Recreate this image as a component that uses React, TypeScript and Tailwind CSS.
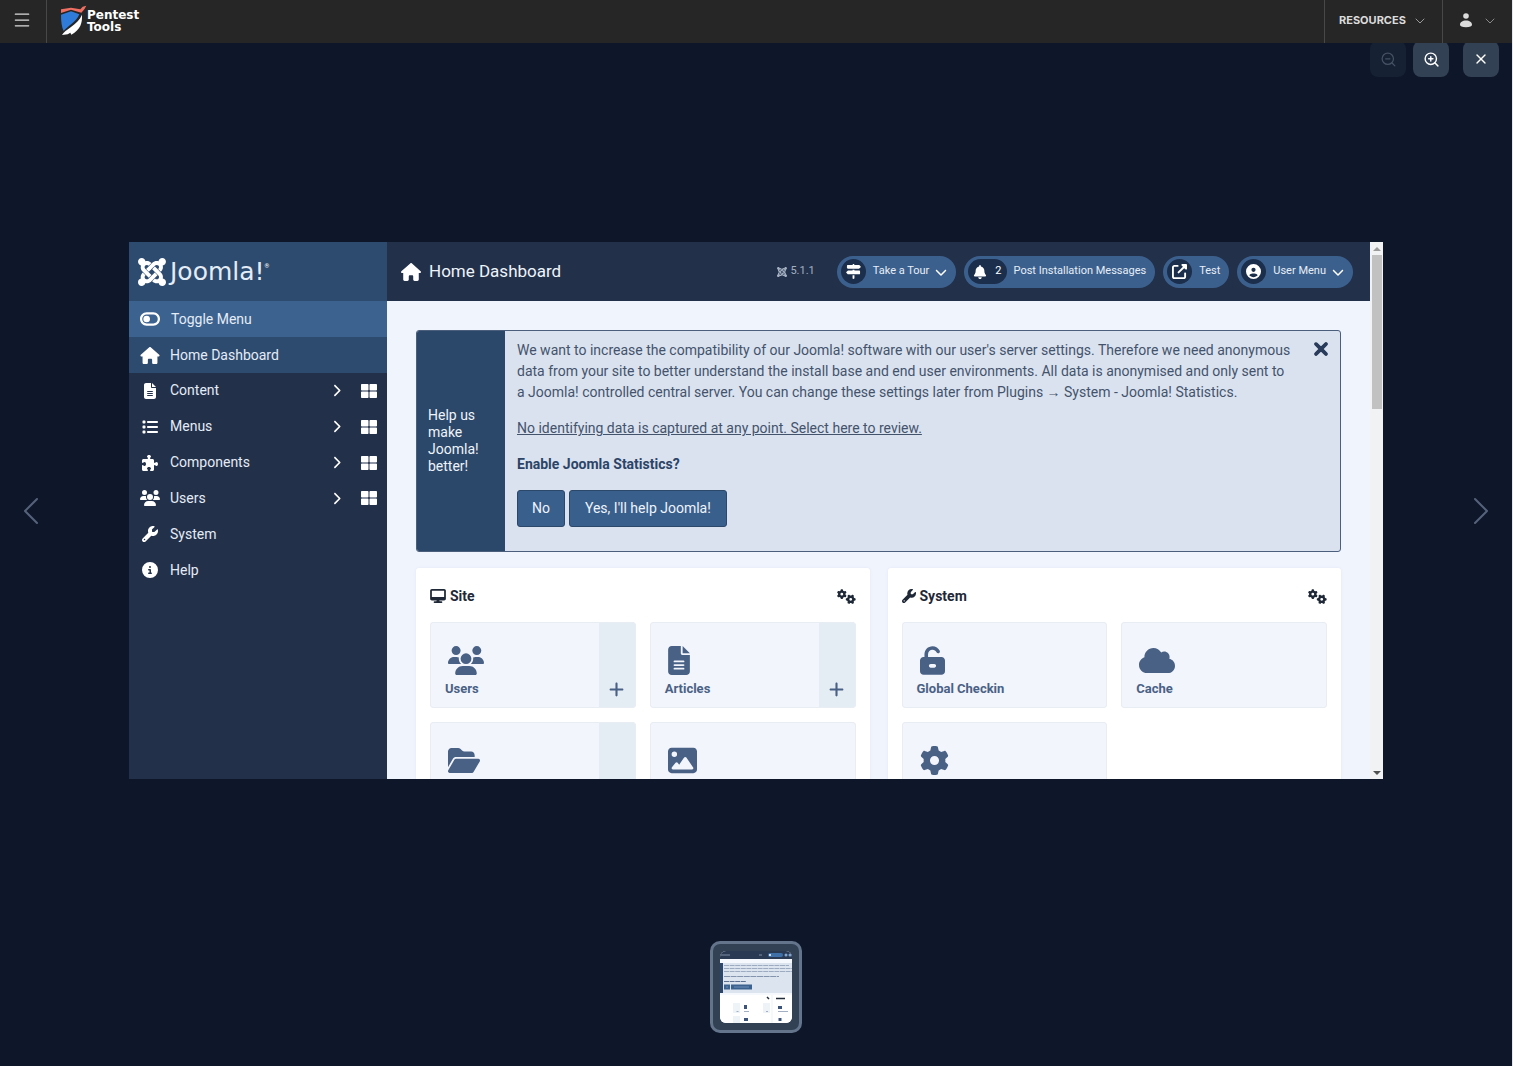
import type { ReactNode } from 'react'
import { ChevronDown, ChevronLeft, ChevronRight, Menu, X, ZoomIn, ZoomOut } from 'lucide-react'
import { FaThLarge } from 'react-icons/fa'
import {
  FaBell,
  FaChevronDown,
  FaChevronRight,
  FaCircleInfo,
  FaCircleUser,
  FaCloud,
  FaDesktop,
  FaFileLines,
  FaFolderOpen,
  FaGear,
  FaGears,
  FaHouse,
  FaImage,
  FaJoomla,
  FaList,
  FaPlus,
  FaPuzzlePiece,
  FaSignsPost,
  FaToggleOff,
  FaUnlockKeyhole,
  FaUpRightFromSquare,
  FaUsers,
  FaWrench,
  FaXmark,
} from 'react-icons/fa6'
import type { IconType } from 'react-icons'

interface MenuItem {
  label: string
  icon: IconType
  expandable?: boolean
}

interface TileItem {
  label?: string
  icon: IconType
  iconWidth: string
  canAdd?: boolean
}

const MENU_ITEMS: MenuItem[] = [
  { label: 'Content', icon: FaFileLines, expandable: true },
  { label: 'Menus', icon: FaList, expandable: true },
  { label: 'Components', icon: FaPuzzlePiece, expandable: true },
  { label: 'Users', icon: FaUsers, expandable: true },
  { label: 'System', icon: FaWrench },
  { label: 'Help', icon: FaCircleInfo },
]

const SITE_TILES: TileItem[] = [
  { label: 'Users', icon: FaUsers, iconWidth: 'w-9', canAdd: true },
  { label: 'Articles', icon: FaFileLines, iconWidth: 'w-[22px]', canAdd: true },
  { icon: FaFolderOpen, iconWidth: 'w-8', canAdd: true },
  { icon: FaImage, iconWidth: 'w-[29px]' },
]

const SYSTEM_TILES: TileItem[] = [
  { label: 'Global Checkin', icon: FaUnlockKeyhole, iconWidth: 'w-[25px]' },
  { label: 'Cache', icon: FaCloud, iconWidth: 'w-9' },
  { icon: FaGear, iconWidth: 'w-[29px]' },
]

function ShieldLogo() {
  return (
    <svg viewBox="180 15 81 93" className="h-[31px] w-[27px]" aria-hidden="true">
      <path d="M183 39V28L213 23l28 5 7-8 11-3-6 11-9 10-31-9z" fill="#ef6f63" />
      <path d="M183 44l30-10 25 9c-5 12-12 19-21 27-11 9-19 15-26 23-6-12-8-30-8-49z" fill="#2f7bd9" />
      <path d="M246 44c1 25-4 44-32 60l-3-6-8 5-17 2c5-9 14-14 27-24 15-11 26-21 33-37z" fill="#fff" />
    </svg>
  )
}

function UserGlyph() {
  return (
    <svg viewBox="0 0 12 15" className="h-[15px] w-3" fill="#dcdcdc" aria-hidden="true">
      <circle cx="6" cy="3" r="2.8" />
      <path d="M6 7.600c3.600 0 6 1.900 6 4.200 0 1.500-2 2.400-6 2.400s-6-.9-6-2.400c0-2.300 2.400-4.200 6-4.200z" />
    </svg>
  )
}

function TopBar() {
  return (
    <header className="relative z-10 flex h-[43px] shrink-0 items-stretch bg-[#262626] font-['Inter',sans-serif] text-white">
      <button aria-label="Open menu" className="flex w-[47px] items-center border-r border-[#484848] pb-[3px] pl-3">
        <Menu size={20} strokeWidth={1.5} className="text-[#dcdcdc]" />
      </button>
      <a href="#" className="flex items-center pb-0.5 pl-[13px]">
        <ShieldLogo />
        <span className="font-['DejaVu_Sans',sans-serif] text-[12px] font-bold leading-3">
          <span className="block">Pentest</span>
          <span className="block">Tools</span>
        </span>
      </a>
      <button className="ml-auto flex w-[118px] items-center gap-1.5 border-l border-[#484848] pb-0.5 pl-3.5 text-[11px] font-bold text-[#dcdcdc]">
        RESOURCES
        <ChevronDown size={16} strokeWidth={1.5} className="text-[#9a9a9a]" />
      </button>
      <button aria-label="Account" className="flex w-[70px] items-center gap-2.5 border-l border-[#484848] pb-0.5 pl-[17px]">
        <UserGlyph />
        <ChevronDown size={16} strokeWidth={1.5} className="text-[#8a8a8a]" />
      </button>
    </header>
  )
}

function ViewerTools() {
  return (
    <div className="flex h-[37px] shrink-0 items-end justify-end pb-[3px] pr-[13px] text-white">
      <button disabled aria-label="Zoom out" className="flex size-9 items-center justify-center rounded-lg bg-[#162133] text-[#455164]">
        <ZoomOut size={17} strokeWidth={1.75} />
      </button>
      <button aria-label="Zoom in" className="ml-[7px] flex size-9 items-center justify-center rounded-lg bg-[#334155]">
        <ZoomIn size={17} strokeWidth={2} />
      </button>
      <button aria-label="Close" className="ml-3.5 flex size-9 items-center justify-center rounded-lg bg-[#334155]">
        <X size={16} strokeWidth={2} />
      </button>
    </div>
  )
}

function Sidebar() {
  return (
    <nav className="w-[258px] shrink-0 bg-[#22304a] text-[14px] text-[#e4ecf6]">
      <div className="flex h-[59px] items-center bg-[#2d4a6f] pl-[9px] text-white">
        <FaJoomla className="h-8 w-7" />
        <span className="ml-1 font-['DejaVu_Sans',sans-serif] text-[25px] leading-7 text-[#e4ecf6]">Joomla!</span>
        <span className="mb-3 text-[6px] leading-none">®</span>
      </div>
      <button className="flex h-9 w-full items-center bg-[#3c628f] pl-[11px]">
        <FaToggleOff className="h-[18px] w-5 text-white" />
        <span className="ml-[11px]">Toggle Menu</span>
      </button>
      <a href="#" className="flex h-9 items-center bg-[#2d4a6f] pl-[11px]">
        <FaHouse className="h-[17px] w-5 text-white" />
        <span className="ml-2.5">Home Dashboard</span>
      </a>
      <ul className="grid h-[215px] grid-rows-6">
        {MENU_ITEMS.map(({ label, icon: Icon, expandable }) => (
          <li key={label} className="flex items-center pl-[11px] pr-2.5">
            <a href="#" className="flex flex-1 items-center">
              <Icon className="h-4 w-5 text-white" />
              <span className="ml-2.5">{label}</span>
            </a>
            {expandable && (
              <>
                <FaChevronRight className="size-[13px] text-white" />
                <a href="#" aria-label={`${label} dashboard`} className="ml-[18px] text-white">
                  <FaThLarge className="size-4" />
                </a>
              </>
            )}
          </li>
        ))}
      </ul>
    </nav>
  )
}

function Pill({ icon, label, count, dropdown }: { icon: ReactNode; label: string; count?: number; dropdown?: boolean }) {
  return (
    <button className="flex h-8 items-center rounded-full bg-[#3c608d] pl-1 pr-[9px] text-[11px] text-[#e6eef8]">
      <span className="flex h-[25px] min-w-[25px] items-center justify-center gap-2 rounded-full bg-[#1b2e4b] px-[5px] text-white">
        {icon}
        {count !== undefined && <span>{count}</span>}
      </span>
      <span className="ml-[7px]">{label}</span>
      {dropdown && <FaChevronDown className="ml-1.5 size-3 text-white" />}
    </button>
  )
}

function DashboardHeader() {
  return (
    <div className="flex h-[59px] items-center bg-[#22304a] pl-3.5 pr-[17px]">
      <FaHouse className="h-[18px] w-5 text-white" />
      <h1 className="ml-2 text-[17px] text-[#eef4fb]">Home Dashboard</h1>
      <div className="ml-auto mr-[22px] flex items-center gap-[3px] text-[11px] text-[#a4b0c2]">
        <FaJoomla className="h-3 w-2.5" />
        5.1.1
      </div>
      <div className="flex gap-2">
        <Pill icon={<FaSignsPost className="size-[15px]" />} label="Take a Tour" dropdown />
        <Pill icon={<FaBell className="size-[14px]" />} label="Post Installation Messages" count={2} />
        <Pill icon={<FaUpRightFromSquare className="size-[15px]" />} label="Test" />
        <Pill icon={<FaCircleUser className="size-[15px]" />} label="User Menu" dropdown />
      </div>
    </div>
  )
}

function StatsAlert() {
  return (
    <section className="flex overflow-hidden rounded-[3px] border border-[#4b5f7d] bg-[#dae2ef] text-[14px] leading-[21px] text-[#44536c]">
      <div className="flex w-[88px] shrink-0 items-center bg-[#2b4769] px-[11px] leading-[17px] text-[#eef4fb]">
        Help us make Joomla! better!
      </div>
      <div className="flex-1 space-y-[15px] pb-6 pl-3 pr-2.5 pt-[9px]">
        <p>
          We want to increase the compatibility of our Joomla! software with our user's server settings. Therefore we
          need anonymous data from your site to better understand the install base and end user environments. All data
          is anonymised and only sent to a Joomla! controlled central server. You can change these settings later from
          Plugins → System - Joomla! Statistics.
        </p>
        <p>
          <a href="#" className="underline">
            No identifying data is captured at any point. Select here to review.
          </a>
        </p>
        <p className="font-bold text-[#2c4467]">Enable Joomla Statistics?</p>
        <div className="flex gap-1 text-[#eef4fb]">
          <button className="h-[37px] rounded-[3px] border border-[#2b4769] bg-[#395f8d] px-3.5">No</button>
          <button className="h-[37px] rounded-[3px] border border-[#2b4769] bg-[#395f8d] px-[15px]">
            Yes, I'll help Joomla!
          </button>
        </div>
      </div>
      <button aria-label="Close" className="mt-2 w-[37px] shrink-0 self-start pl-2 text-[#2a3c5c]">
        <FaXmark className="size-5" stroke="currentColor" strokeWidth={32} />
      </button>
    </section>
  )
}

function Tile({ label, icon: Icon, iconWidth, canAdd }: TileItem) {
  return (
    <div className="flex h-[86px] overflow-hidden rounded-[3px] border border-[#e8ecf3] bg-[#f2f5fb] text-[#4a6186]">
      <a href="#" className="flex-1 pl-3.5 pt-[23px] text-[13px] font-bold leading-4">
        <Icon className={`ml-[3px] h-[29px] ${iconWidth}`} />
        <span className="mt-1.5 block">{label}</span>
      </a>
      {canAdd && (
        <button aria-label="Add" className="flex w-9 items-end justify-center bg-[#e4ecf4] pb-[9px]">
          <FaPlus className="size-[17px]" />
        </button>
      )}
    </div>
  )
}

function TileCard({ title, icon: Icon, iconWidth, tiles }: { title: string; icon: IconType; iconWidth: string; tiles: TileItem[] }) {
  return (
    <section className="rounded-[3px] bg-white px-3.5 pb-3.5 shadow-[0_0_3px_#dfe6f2]">
      <div className="flex h-[54px] items-center pt-0.5 text-[#1f2836]">
        <Icon className={`h-3.5 ${iconWidth}`} />
        <h2 className="ml-1 text-[14px] font-bold">{title}</h2>
        <button aria-label={`${title} settings`} className="ml-auto">
          <FaGears className="h-[15px] w-[19px]" />
        </button>
      </div>
      <div className="grid grid-cols-2 gap-3.5">
        {tiles.map((tile, index) => (
          <Tile key={index} {...tile} />
        ))}
      </div>
    </section>
  )
}

function Scrollbar() {
  return (
    <div className="flex w-[13px] shrink-0 flex-col items-center justify-between bg-[#f1f2f4] pb-1 pt-[5px]">
      <div className="flex flex-col items-center gap-1">
        <span className="border-x-4 border-b-4 border-x-transparent border-b-[#9a9a9a]" />
        <span className="h-[154px] w-2.5 bg-[#c1c1c1]" />
      </div>
      <span className="border-x-4 border-t-4 border-x-transparent border-t-[#505050]" />
    </div>
  )
}

function JoomlaScreen() {
  return (
    <figure className="flex aspect-[1254/537] min-w-0 flex-1 overflow-hidden bg-[#f0f4fd] font-['Roboto',sans-serif]">
      <Sidebar />
      <div className="min-w-0 flex-1">
        <DashboardHeader />
        <div className="px-[29px] pt-[29px]">
          <StatsAlert />
          <div className="mt-4 grid grid-cols-2 gap-[18px]">
            <TileCard title="Site" icon={FaDesktop} iconWidth="w-4" tiles={SITE_TILES} />
            <TileCard title="System" icon={FaWrench} iconWidth="w-3.5" tiles={SYSTEM_TILES} />
          </div>
        </div>
      </div>
      <Scrollbar />
    </figure>
  )
}

function Thumbnail() {
  return (
    <button aria-label="Image 1" className="rounded-[10px] border-[3px] border-[#64748b] bg-[#334155] p-[7px]">
      <svg viewBox="0 0 72 72" className="size-[72px] rounded-md">
        <rect width="72" height="72" fill="#f5f8fd" />
        <rect width="72" height="8" fill="#2a3a53" />
        <path d="M1 4h9M39 4h3" stroke="#7c8da6" />
        <rect x="48" y="2" width="15" height="4" rx="2" fill="#3f70a8" />
        <circle cx="50" cy="4" r="1" fill="#fff" />
        <circle cx="66" cy="4" r="1.500" fill="#7fa5cf" />
        <circle cx="70" cy="4" r="1.500" fill="#7fa5cf" />
        <rect y="12" width="72" height="30" fill="#dce4f0" />
        <rect y="12" width="3" height="30" fill="#2b4769" />
        <path d="M4 14.500h65M4 17.500h68M4 20.500h68" stroke="#9dabc0" strokeDasharray="5 .6" />
        <path d="M4 25.500h55" stroke="#8494ad" strokeDasharray="6 .6" />
        <path d="M4 30.500h22" stroke="#5c7090" strokeDasharray="5 .6" />
        <path d="M4 33.500h6v5H4zM11 33.500h21v5H11z" fill="#3c628f" />
        <path d="M6 36h2M14 36h15" stroke="#6d8fb6" />
        <path d="M0 44h51v28H0zM53 44h19v28H53z" fill="#fff" />
        <path d="M47 46l2 2M56 47.500h9" stroke="#222c3a" strokeWidth="1.500" />
        <path d="M13 52h7v10h-7zM43 52h7v10h-7zM13 65h7v7h-7z" fill="#eef3f8" />
        <path d="M24 54h3v4h-3zM58 55h4v3h-4zM24 67h4v3h-4zM58.500 67h3v3h-3z" fill="#3d547a" />
        <path d="M24 60.500h5M58 60.500h10M16.500 60.500h2M46 60.500h2" stroke="#a3afc2" />
      </svg>
    </button>
  )
}

export default function App() {
  return (
    <div className="flex min-h-screen flex-col border-r border-[#e5e7eb] bg-[#0e172a]">
      <TopBar />
      <ViewerTools />
      <main className="flex flex-1 items-center">
        <button aria-label="Previous image" className="w-[129px] shrink-0 pl-[7px] text-[#56627a]">
          <ChevronLeft size={48} strokeWidth={1} />
        </button>
        <JoomlaScreen />
        <button aria-label="Next image" className="flex w-[129px] shrink-0 justify-end pr-[7px] text-[#56627a]">
          <ChevronRight size={48} strokeWidth={1} />
        </button>
      </main>
      <footer className="flex justify-center pb-[33px]">
        <Thumbnail />
      </footer>
    </div>
  )
}
